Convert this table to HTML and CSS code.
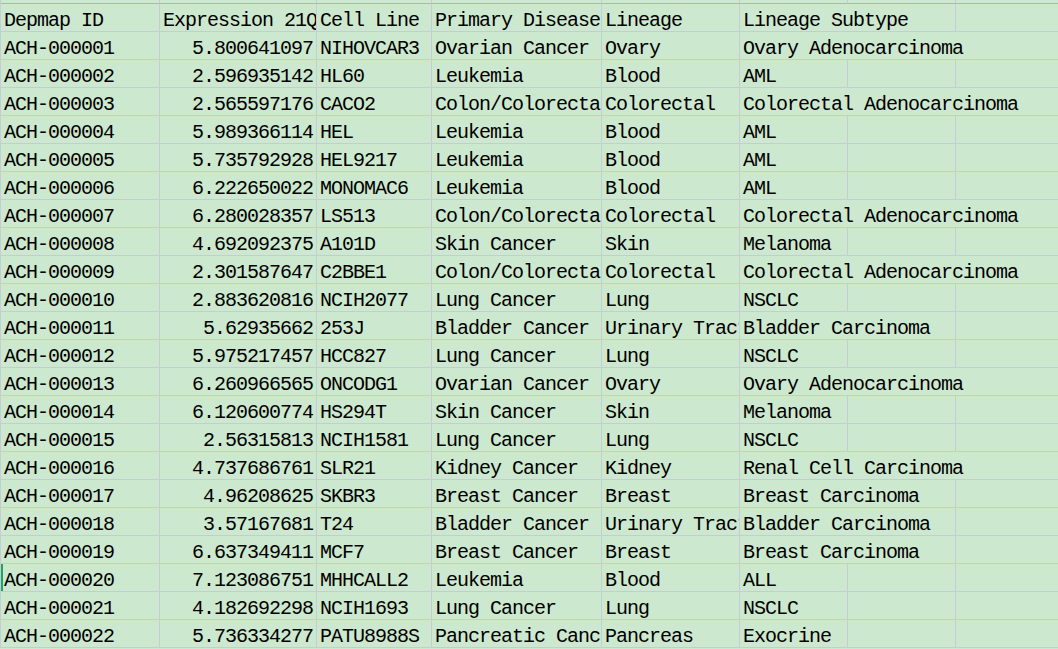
FILE: index.html
```html
<!DOCTYPE html>
<html>
<head>
<meta charset="utf-8">
<link rel="stylesheet" href="styles.css">
</head>
<body>
<div class="sheet">
  <div class="c top"></div><div class="c top"></div><div class="c top"></div><div class="c top"></div><div class="c top"></div><div class="c top"></div><div class="c top"></div><div class="c top"></div>

  <div class="c">Depmap ID</div><div class="c">Expression 21Q4</div><div class="c">Cell Line Name</div><div class="c">Primary Disease</div><div class="c">Lineage</div><div class="c s2">Lineage Subtype</div><div class="c"></div>

  <div class="c">ACH-000001</div><div class="c num">5.800641097</div><div class="c">NIHOVCAR3</div><div class="c">Ovarian Cancer</div><div class="c">Ovary</div><div class="c s3">Ovary Adenocarcinoma</div>
  <div class="c">ACH-000002</div><div class="c num">2.596935142</div><div class="c">HL60</div><div class="c">Leukemia</div><div class="c">Blood</div><div class="c">AML</div><div class="c"></div><div class="c"></div>
  <div class="c">ACH-000003</div><div class="c num">2.565597176</div><div class="c">CACO2</div><div class="c">Colon/Colorectal Cancer</div><div class="c">Colorectal</div><div class="c s3">Colorectal Adenocarcinoma</div>
  <div class="c">ACH-000004</div><div class="c num">5.989366114</div><div class="c">HEL</div><div class="c">Leukemia</div><div class="c">Blood</div><div class="c">AML</div><div class="c"></div><div class="c"></div>
  <div class="c">ACH-000005</div><div class="c num">5.735792928</div><div class="c">HEL9217</div><div class="c">Leukemia</div><div class="c">Blood</div><div class="c">AML</div><div class="c"></div><div class="c"></div>
  <div class="c">ACH-000006</div><div class="c num">6.222650022</div><div class="c">MONOMAC6</div><div class="c">Leukemia</div><div class="c">Blood</div><div class="c">AML</div><div class="c"></div><div class="c"></div>
  <div class="c">ACH-000007</div><div class="c num">6.280028357</div><div class="c">LS513</div><div class="c">Colon/Colorectal Cancer</div><div class="c">Colorectal</div><div class="c s3">Colorectal Adenocarcinoma</div>
  <div class="c">ACH-000008</div><div class="c num">4.692092375</div><div class="c">A101D</div><div class="c">Skin Cancer</div><div class="c">Skin</div><div class="c">Melanoma</div><div class="c"></div><div class="c"></div>
  <div class="c">ACH-000009</div><div class="c num">2.301587647</div><div class="c">C2BBE1</div><div class="c">Colon/Colorectal Cancer</div><div class="c">Colorectal</div><div class="c s3">Colorectal Adenocarcinoma</div>
  <div class="c">ACH-000010</div><div class="c num">2.883620816</div><div class="c">NCIH2077</div><div class="c">Lung Cancer</div><div class="c">Lung</div><div class="c">NSCLC</div><div class="c"></div><div class="c"></div>
  <div class="c">ACH-000011</div><div class="c num">5.62935662</div><div class="c">253J</div><div class="c">Bladder Cancer</div><div class="c">Urinary Tract</div><div class="c s2">Bladder Carcinoma</div><div class="c"></div>
  <div class="c">ACH-000012</div><div class="c num">5.975217457</div><div class="c">HCC827</div><div class="c">Lung Cancer</div><div class="c">Lung</div><div class="c">NSCLC</div><div class="c"></div><div class="c"></div>
  <div class="c">ACH-000013</div><div class="c num">6.260966565</div><div class="c">ONCODG1</div><div class="c">Ovarian Cancer</div><div class="c">Ovary</div><div class="c s3">Ovary Adenocarcinoma</div>
  <div class="c">ACH-000014</div><div class="c num">6.120600774</div><div class="c">HS294T</div><div class="c">Skin Cancer</div><div class="c">Skin</div><div class="c">Melanoma</div><div class="c"></div><div class="c"></div>
  <div class="c">ACH-000015</div><div class="c num">2.56315813</div><div class="c">NCIH1581</div><div class="c">Lung Cancer</div><div class="c">Lung</div><div class="c">NSCLC</div><div class="c"></div><div class="c"></div>
  <div class="c">ACH-000016</div><div class="c num">4.737686761</div><div class="c">SLR21</div><div class="c">Kidney Cancer</div><div class="c">Kidney</div><div class="c s3">Renal Cell Carcinoma</div>
  <div class="c">ACH-000017</div><div class="c num">4.96208625</div><div class="c">SKBR3</div><div class="c">Breast Cancer</div><div class="c">Breast</div><div class="c s2">Breast Carcinoma</div><div class="c"></div>
  <div class="c">ACH-000018</div><div class="c num">3.57167681</div><div class="c">T24</div><div class="c">Bladder Cancer</div><div class="c">Urinary Tract</div><div class="c s2">Bladder Carcinoma</div><div class="c"></div>
  <div class="c">ACH-000019</div><div class="c num">6.637349411</div><div class="c">MCF7</div><div class="c">Breast Cancer</div><div class="c">Breast</div><div class="c s2">Breast Carcinoma</div><div class="c"></div>
  <div class="c sel">ACH-000020</div><div class="c num">7.123086751</div><div class="c">MHHCALL2</div><div class="c">Leukemia</div><div class="c">Blood</div><div class="c">ALL</div><div class="c"></div><div class="c"></div>
  <div class="c">ACH-000021</div><div class="c num">4.182692298</div><div class="c">NCIH1693</div><div class="c">Lung Cancer</div><div class="c">Lung</div><div class="c">NSCLC</div><div class="c"></div><div class="c"></div>
  <div class="c">ACH-000022</div><div class="c num">5.736334277</div><div class="c">PATU8988S</div><div class="c">Pancreatic Cancer</div><div class="c">Pancreas</div><div class="c">Exocrine</div><div class="c"></div><div class="c"></div>
</div>
</body>
</html>
```

FILE: styles.css
```css
html, body {
  margin: 0;
  padding: 0;
  background: #cce8cf;
  overflow: hidden;
}

.sheet {
  display: grid;
  grid-template-columns: 159px 157px 115px 170px 138px 108px 108px 108px;
  grid-template-rows: 4px;
  grid-auto-rows: 28px;
  width: max-content;
  border-left: 1px solid #c4ccd8;
  background: #cce8cf;
  font-family: "Liberation Mono", "DejaVu Sans Mono", monospace;
  font-size: 20px;
  letter-spacing: -1px;
  color: #000;
}

.c {
  box-sizing: border-box;
  height: 28px;
  border-right: 1px solid #c4ccd8;
  border-bottom: 1px solid #c4ccd8;
  padding: 5px 3px 0 3px;
  line-height: 23px;
  white-space: nowrap;
  overflow: hidden;
}

.c.top {
  height: 4px;
  padding: 0;
  border-bottom-color: #aab2c6;
}

.num {
  text-align: right;
}

.s2 {
  grid-column: span 2;
}

.s3 {
  grid-column: span 3;
}

.sel {
  box-shadow: inset 2px 0 0 #21a366;
}
```
